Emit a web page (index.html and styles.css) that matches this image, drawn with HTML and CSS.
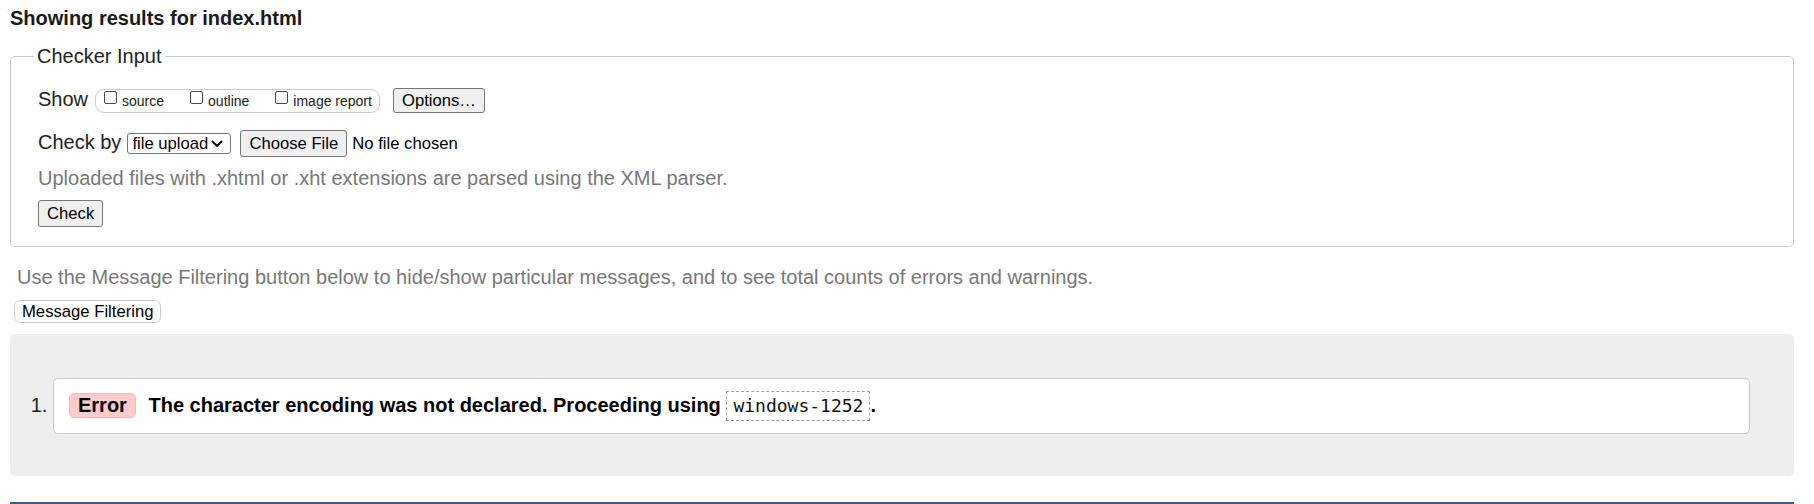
FILE: index.html
```html
<!DOCTYPE html>
<html lang="en">
<head>
<meta charset="utf-8">
<title>Showing results for index.html</title>
<link rel="stylesheet" href="styles.css">
</head>
<body>
<h2 class="results-title">Showing results for index.html</h2>
<fieldset class="checker">
  <legend class="checker-legend">Checker Input</legend>
  <div class="row row-show">
    <span class="row-label">Show</span>
    <span class="opt-group"><label class="opt"><input type="checkbox" class="cb"><span class="opt-text">source</span></label><label class="opt"><input type="checkbox" class="cb"><span class="opt-text">outline</span></label><label class="opt opt-last"><input type="checkbox" class="cb"><span class="opt-text">image report</span></label></span>
    <button class="btn btn-options" type="button">Options…</button>
  </div>
  <div class="row row-checkby">
    <span class="row-label">Check by</span>
    <span class="select-wrap">
      <select class="select"><option>file upload</option></select>
      <svg class="chevron" viewBox="0 0 12 8" width="12" height="8"><path d="M1.5 1.5 L6 6 L10.5 1.5" fill="none" stroke="#111" stroke-width="2" stroke-linecap="round" stroke-linejoin="round"/></svg>
    </span>
    <button class="btn btn-file" type="button">Choose File</button>
    <span class="file-status">No file chosen</span>
  </div>
  <p class="note">Uploaded files with .xhtml or .xht extensions are parsed using the XML parser.</p>
  <div class="submit-row"><button class="btn btn-check" type="button">Check</button></div>
</fieldset>
<p class="filter-note">Use the Message Filtering button below to hide/show particular messages, and to see total counts of errors and warnings.</p>
<div class="filter-row"><button class="btn-filter" type="button">Message Filtering</button></div>
<div class="results">
  <ol class="messages">
    <li class="message">
      <p class="message-text"><strong class="badge">Error</strong> The character encoding was not declared. Proceeding using <code class="code">windows-1252</code>.</p>
    </li>
  </ol>
</div>
<div class="footer"></div>
</body>
</html>
```

FILE: styles.css
```css
html, body {
  background: #ffffff;
}

body {
  margin: 0;
  padding: 0 20px 0 10px;
  font-family: "Liberation Sans", Arial, sans-serif;
  font-size: 20px;
  line-height: 23px;
  color: #222222;
}

.results-title {
  margin: 7px 0 0;
  font-size: 20px;
  line-height: 23px;
  font-weight: bold;
  color: #1a1a1a;
}

.checker {
  margin: 15px 0 0;
  padding: 20px 20px 19px 27px;
  border: 1px solid #cccccc;
  border-radius: 5px;
}

.checker-legend {
  margin-left: -4px;
  padding: 0 3px;
  font-size: 20px;
  line-height: 23px;
  color: #222222;
}

.row {
  display: flex;
  align-items: baseline;
}

.row-checkby {
  margin-top: 17px;
}

.row-label {
  margin-right: 6px;
}

.row-show .row-label {
  margin-right: 7px;
}

.opt-group {
  display: inline-block;
  border: 1px solid #cccccc;
  border-radius: 9px;
  padding: 0 7px 0 4px;
  font-size: 14px;
  line-height: 22px;
  white-space: nowrap;
}

.opt {
  margin-right: 22px;
}

.opt-last {
  margin-right: 0;
}

.cb {
  -webkit-appearance: none;
  appearance: none;
  box-sizing: border-box;
  width: 13px;
  height: 13px;
  margin: 0 5px 2px 4px;
  border: 1px solid #4a4a4a;
  border-radius: 2px;
  background: #ffffff;
  vertical-align: baseline;
}

.btn {
  font-family: "Liberation Sans", Arial, sans-serif;
  font-size: 16.67px;
  line-height: 19px;
  color: #000000;
  background: #efefef;
  border: 1px solid #767676;
  border-radius: 3px;
  padding: 3px 8px;
}

.btn-options {
  margin-left: 13px;
  padding: 2px 8px;
}

.select-wrap {
  position: relative;
  display: inline-flex;
}

.select {
  -webkit-appearance: none;
  appearance: none;
  box-sizing: border-box;
  width: 104px;
  height: 21px;
  margin: 0;
  padding: 0 20px 0 4px;
  font-family: "Liberation Sans", Arial, sans-serif;
  font-size: 16.67px;
  line-height: 19px;
  color: #000000;
  background: #ffffff;
  border: 1px solid #767676;
  border-radius: 3px;
}

.chevron {
  position: absolute;
  right: 8px;
  top: 7px;
  pointer-events: none;
}

.btn-file {
  margin-left: 9px;
}

.file-status {
  margin-left: 5px;
  font-size: 16.67px;
  color: #000000;
}

.note {
  margin: 10px 0 0;
  color: #787878;
}

.submit-row {
  margin-top: 10px;
}

.filter-note {
  margin: 19px 0 0;
  padding-left: 7px;
  color: #787878;
}

.filter-row {
  margin-top: 10px;
  padding-left: 4px;
}

.btn-filter {
  font-family: "Liberation Sans", Arial, sans-serif;
  font-size: 16.67px;
  line-height: 19px;
  color: #000000;
  background: #ffffff;
  border: 1px solid #cccccc;
  border-radius: 6px;
  padding: 1px 7px;
}

.results {
  margin-top: 11px;
  background: #eeeeee;
  border-radius: 5px;
  padding: 44px 44px 42px 43px;
}

.messages {
  margin: 0;
  padding: 0;
  list-style: decimal outside;
}

.message {
  background: #ffffff;
  border: 1px solid #cccccc;
  border-radius: 5px;
  padding: 12px 15px;
}

.message::marker {
  color: #222222;
}

.message-text {
  margin: 0;
  font-weight: bold;
  color: #000000;
}

.badge {
  display: inline-block;
  margin-right: 7px;
  padding: 0 8px;
  line-height: 23px;
  background: #ffcccc;
  border: 1px solid #f2b9b9;
  border-radius: 5px;
  color: #000000;
}

.code {
  display: inline-block;
  margin-right: 0;
  padding: 3px 6px;
  font-family: "DejaVu Sans Mono", "Liberation Mono", monospace;
  font-size: 18px;
  line-height: 22px;
  font-weight: normal;
  color: #111111;
  border: 1px dashed #a0a0a0;
}

.footer {
  margin-top: 26px;
  border-top: 3px solid #385d96;
}
```
